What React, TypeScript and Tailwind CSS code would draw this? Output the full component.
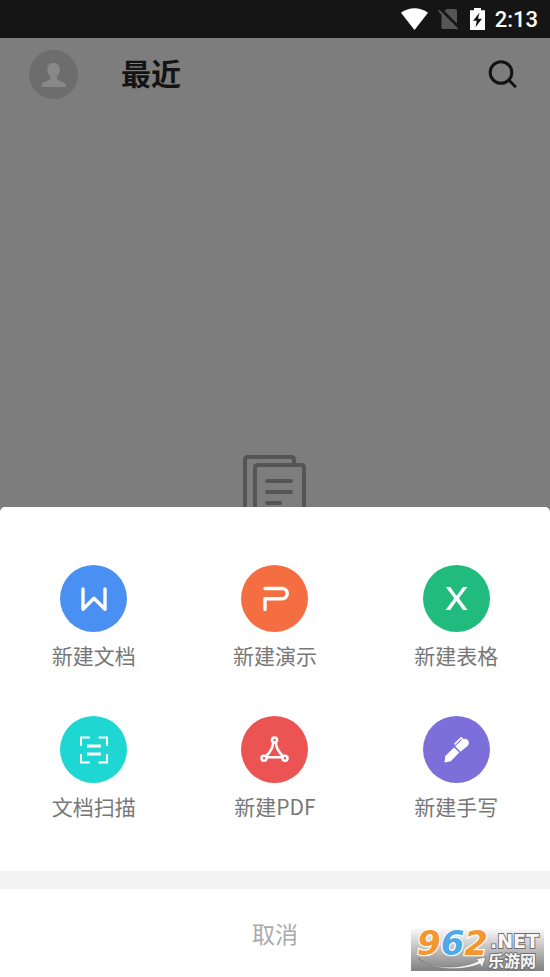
import type { ReactNode } from "react";

type Action = { label: string; color: string; icon: ReactNode };

const actions: Action[] = [
  {
    label: "新建文档",
    color: "bg-[#4990f2]",
    icon: (
      <path d="M23 24v20.200L34 33.2l11 11v-20.200" fill="none" stroke="#fff" strokeWidth="3.4" strokeLinecap="round" strokeLinejoin="round" />
    ),
  },
  {
    label: "新建演示",
    color: "bg-[#f56e42]",
    icon: (
      <path d="M24 23.500h17.200a4.700 4.700 0 0 1 0 10.200H24v10.800" fill="none" stroke="#fff" strokeWidth="3.400" strokeLinecap="round" strokeLinejoin="round" />
    ),
  },
  {
    label: "新建表格",
    color: "bg-[#20bb7d]",
    icon: (
      <path d="M22.800 22h4.400l6.400 8.700L40 22h4.400l-8.500 11.300 8.700 11.700h-4.500l-6.500-9-6.500 9h-4.500l8.700-11.700z" fill="#fff" />
    ),
  },
  {
    label: "文档扫描",
    color: "bg-[#1ed7d2]",
    icon: (
      <>
        <path d="M30 21.500h-9V30M38.500 21.500h8.500V30M21 38v8.500h9M47 38v8.500h-8.500" fill="none" stroke="#fff" strokeWidth="2" />
        <path d="M27 30h14M27 38h14" fill="none" stroke="#fff" strokeWidth="3" />
      </>
    ),
  },
  {
    label: "新建PDF",
    color: "bg-[#ec5453]",
    icon: (
      <g fill="none" stroke="#fff" strokeWidth="2.5">
        <circle cx="33.5" cy="24" r="2.500" />
        <circle cx="23" cy="42.300" r="2.500" />
        <circle cx="44" cy="42.300" r="2.500" />
        <path d="M32.200 26.300c-.4 5.500-3 10-7.400 14M34.800 26.300c.4 5.500 3 10 7.400 14M25.300 41.300h16.400" />
      </g>
    ),
  },
  {
    label: "新建手写",
    color: "bg-[#7d6fda]",
    icon: (
      <g fill="#fff">
        <path d="M21.500 46.500l.8-6.500 8.700-8.600 5.200 5.200-8.500 8.700z" />
        <path d="M32.200 30.200l6.700-6.300c1.700-1.500 4-1.600 5.800-.1 1.500 1.700 1.500 4.100.1 5.900l-7.400 6.100z" />
        <path d="M31.500 28.300l6.700-6.300 1.600 1.400" fill="none" stroke="#fff" strokeWidth="1.700" />
      </g>
    ),
  },
];

function StatusBar() {
  return (
    <div className="flex h-[38px] items-center justify-end bg-[#151515] pr-3 text-white">
      <svg className="mr-[10px]" width="27" height="22" viewBox="0 0 27 22" aria-hidden="true">
        <path d="M0 4.800C7.800-1.200 19.200-1.200 27 4.800L13.500 22z" fill="#fff" />
      </svg>
      <svg className="mr-[10px]" width="22" height="24" viewBox="0 0 22 24" aria-hidden="true">
        <path d="M8.500 2H17.500Q19 2 19 3.500V22H5Q3.500 22 3.500 20.500V7z" fill="#565656" />
        <path d="M2 1.500l19 19" stroke="#151515" strokeWidth="3" />
        <path d="M.8 3.500l18.700 18.700" stroke="#565656" strokeWidth="1.800" />
      </svg>
      <svg className="mr-[10px]" width="15" height="22" viewBox="0 0 15 22" aria-hidden="true">
        <path d="M4 0h7v2.200h4V22H0V2.200h4z" fill="#fff" />
        <path d="M9.500 4.800L3 12.700h3.800L5.500 19.200 12 10.800H8z" fill="#151515" />
      </svg>
      <span className="pt-0.5 font-[Roboto,sans-serif] text-[22px] leading-6 font-medium">2:13</span>
    </div>
  );
}

function Header() {
  return (
    <header className="flex h-[72px] items-center pr-8 pl-[29px] text-[#131313]">
      <button type="button" aria-label="账户" className="size-[49px] rounded-full bg-[#6d6d6d]">
        <svg viewBox="0 0 49 49" aria-hidden="true">
          <path d="M24.500 13c-4 0-6.200 2.700-6.200 6.300 0 3.200 1.200 5.700 2.900 7.100v2.200c0 1.400-1.300 1.900-3.400 2.600-3.300 1-5.300 2.200-5.500 5.700h24.700c-.2-3.500-2.200-4.700-5.500-5.700-2.200-.7-3.500-1.200-3.500-2.600v-2.200c1.700-1.400 2.900-3.900 2.900-7.100 0-3.600-2.300-6.300-6.400-6.300z" fill="#888" />
        </svg>
      </button>
      <h1 className="ml-[43px] pb-1 text-[30px] leading-9 font-bold">最近</h1>
      <button type="button" aria-label="搜索" className="ml-auto">
        <svg width="30" height="30" viewBox="0 0 30 30" fill="none" stroke="#131313" strokeWidth="3" aria-hidden="true">
          <circle cx="13" cy="13.500" r="10.800" />
          <path d="M21 21.200l6 6" strokeLinecap="round" />
        </svg>
      </button>
    </header>
  );
}

function Watermark() {
  return (
    <svg className="absolute right-[6px] bottom-[6px] overflow-visible" width="133" height="42" viewBox="0 0 133 42" role="img" aria-label="962.NET 乐游网">
      <defs>
        <linearGradient id="plate" x1="0" y1="0" x2="0" y2="1">
          <stop offset="0" stopColor="#f8f8f8" />
          <stop offset="1" stopColor="#808080" />
        </linearGradient>
      </defs>
      <rect width="133" height="42" fill="url(#plate)" />
      <path d="M7 29c12 11 42 12 60 3l-3-2 11-2-4 11-2-4c-19 8-50 6-62-6z" fill="#f2f2f2" stroke="#777" strokeWidth=".7" />
      <text x="6" y="26" fontFamily="'DejaVu Sans', sans-serif" fontWeight="700" fontStyle="italic" fontSize="34" stroke="#fff" strokeWidth="2.500" paintOrder="stroke">
        <tspan fill="#f5962e">9</tspan>
        <tspan fill="#4fa9e6">6</tspan>
        <tspan fill="#f5962e">2</tspan>
      </text>
      <g fill="#f8f8f8" stroke="#707070" strokeWidth="1.800" paintOrder="stroke">
        <text x="79" y="19" fontFamily="'DejaVu Sans', sans-serif" fontWeight="700" fontSize="19">.NET</text>
        <text x="77" y="38" fontFamily="'Noto Sans CJK SC', sans-serif" fontWeight="700" fontSize="16">乐游网</text>
      </g>
    </svg>
  );
}

export default function App() {
  return (
    <div className="relative flex min-h-screen flex-col bg-[#7d7d7d] font-['Noto_Sans_CJK_SC',sans-serif]">
      <StatusBar />
      <Header />
      <main className="flex flex-1 items-end justify-center">
        <svg width="66" height="53" viewBox="0 0 66 53" fill="none" stroke="#555" strokeWidth="4" aria-hidden="true">
          <path d="M3 53V6q0-3 3-3h43q3 0 3 3v5" />
          <path d="M13 53V14q0-3 3-3h43q3 0 3 3v39" />
          <path d="M25 27h24M25 38h24M25 49h13" strokeLinecap="round" />
        </svg>
      </main>
      <section aria-label="新建" className="rounded-t-[5px] bg-white">
        <div className="grid grid-cols-3 gap-y-[46px] px-[3px] pt-[58px] pb-[50px]">
          {actions.map((action) => (
            <button key={action.label} type="button" className="flex flex-col items-center gap-2">
              <span className={`size-[67px] rounded-full ${action.color}`}>
                <svg viewBox="0 0 67 67" aria-hidden="true">{action.icon}</svg>
              </span>
              <span className="text-[21px] leading-[30px] text-[#777]">{action.label}</span>
            </button>
          ))}
        </div>
        <div className="h-[18px] bg-[#f4f4f4]" />
        <button type="button" className="block h-[88px] w-full text-[23px] text-[#aaa]">取消</button>
      </section>
      <Watermark />
    </div>
  );
}
